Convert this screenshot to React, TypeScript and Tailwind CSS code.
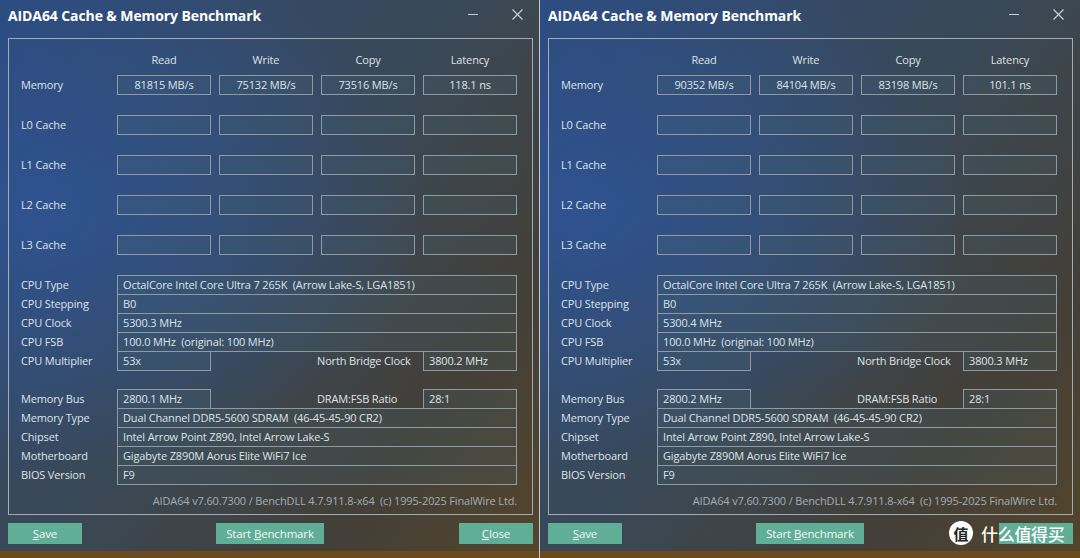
import type { ReactNode } from 'react'

type Bench = {
  read: string
  write: string
  copy: string
  latency: string
  clock: string
  nbClock: string
  memBus: string
}

const left: Bench = {
  read: '81815 MB/s',
  write: '75132 MB/s',
  copy: '73516 MB/s',
  latency: '118.1 ns',
  clock: '5300.3 MHz',
  nbClock: '3800.2 MHz',
  memBus: '2800.1 MHz',
}

const right: Bench = {
  read: '90352 MB/s',
  write: '84104 MB/s',
  copy: '83198 MB/s',
  latency: '101.1 ns',
  clock: '5300.4 MHz',
  nbClock: '3800.3 MHz',
  memBus: '2800.2 MHz',
}

const cacheRows = ['L0 Cache', 'L1 Cache', 'L2 Cache', 'L3 Cache']

function Cell({ children, className = '' }: { children?: ReactNode; className?: string }) {
  return (
    <div className={`flex h-[20px] items-center whitespace-pre border border-[#8e9ba4] bg-[#4a6a72]/20 ${className}`}>
      {children}
    </div>
  )
}

function InfoRow({ label, value, first }: { label: string; value: string; first?: boolean }) {
  return (
    <div className={`flex items-center ${first ? '' : '-mt-px'}`}>
      <span className="w-[96px] shrink-0">{label}</span>
      <Cell className="w-[400px] pl-[5px]">{value}</Cell>
    </div>
  )
}

function SplitRow({ label, value, midLabel, midValue, first }: {
  label: string
  value: string
  midLabel: string
  midValue: string
  first?: boolean
}) {
  return (
    <div className={`flex items-center ${first ? '' : '-mt-px'}`}>
      <span className="w-[96px] shrink-0">{label}</span>
      <Cell className="w-[94px] pl-[5px]">{value}</Cell>
      <span className="ml-[106px] w-[106px]">{midLabel}</span>
      <Cell className="w-[94px] pl-[5px]">{midValue}</Cell>
    </div>
  )
}

function Button({ children, className = '' }: { children?: ReactNode; className?: string }) {
  return (
    <div className={`flex h-[21px] items-center justify-center bg-[#5fae95] text-[11.5px] text-[#f2f8f5] ${className}`}>
      {children}
    </div>
  )
}

function BenchWindow({ data, watermark }: { data: Bench; watermark?: boolean }) {
  return (
    <div className="relative flex h-[551px] flex-col bg-[radial-gradient(ellipse_at_8%_38%,rgba(46,84,150,0.85)_0%,rgba(46,84,150,0)_55%),linear-gradient(128deg,#2c4a7c_0%,#354a66_28%,#3a4855_50%,#433f38_78%,#54452b_100%)] font-['Open_Sans','Noto_Sans',sans-serif] text-[11px] tracking-[-0.15px] text-[#dde3e8]">
      {/* Title bar */}
      <div className="flex h-[38px] items-start justify-between pl-[8px] pr-[16px] pt-[5px]">
        <span className="text-[14px] font-bold tracking-[-0.1px] text-white">AIDA64 Cache &amp; Memory Benchmark</span>
        <div className="flex items-center gap-[34px] pt-[4px]">
          <div className="h-px w-[10px] bg-[#c9d0d6]" />
          <svg width="11" height="11" viewBox="0 0 11 11" stroke="#c9d0d6" strokeWidth="1.2">
            <path d="M0.5 0.5 L10.5 10.5 M10.5 0.5 L0.5 10.5" />
          </svg>
        </div>
      </div>

      {/* Group box */}
      <div className="ml-[8px] flex h-[477px] w-[525px] flex-col border border-[#a3acb3] pl-[12px]">
        <div className="mt-[11px] flex h-[20px] items-center">
          <span className="w-[96px]" />
          <div className="grid grid-cols-[94px_94px_94px_94px] gap-[8px] text-center">
            <span>Read</span>
            <span>Write</span>
            <span>Copy</span>
            <span>Latency</span>
          </div>
        </div>

        <div className="mt-[5px] flex items-center">
          <span className="w-[96px] shrink-0">Memory</span>
          <div className="grid grid-cols-[94px_94px_94px_94px] gap-[8px]">
            <Cell className="justify-center">{data.read}</Cell>
            <Cell className="justify-center">{data.write}</Cell>
            <Cell className="justify-center">{data.copy}</Cell>
            <Cell className="justify-center">{data.latency}</Cell>
          </div>
        </div>

        {cacheRows.map((row) => (
          <div key={row} className="mt-[20px] flex items-center">
            <span className="w-[96px] shrink-0">{row}</span>
            <div className="grid grid-cols-[94px_94px_94px_94px] gap-[8px]">
              <Cell />
              <Cell />
              <Cell />
              <Cell />
            </div>
          </div>
        ))}

        <div className="mt-[20px] flex flex-col">
          <InfoRow first label="CPU Type" value="OctalCore Intel Core Ultra 7 265K  (Arrow Lake-S, LGA1851)" />
          <InfoRow label="CPU Stepping" value="B0" />
          <InfoRow label="CPU Clock" value={data.clock} />
          <InfoRow label="CPU FSB" value="100.0 MHz  (original: 100 MHz)" />
          <SplitRow label="CPU Multiplier" value="53x" midLabel="North Bridge Clock" midValue={data.nbClock} />
        </div>

        <div className="mt-[18px] flex flex-col">
          <SplitRow first label="Memory Bus" value={data.memBus} midLabel="DRAM:FSB Ratio" midValue="28:1" />
          <InfoRow label="Memory Type" value="Dual Channel DDR5-5600 SDRAM  (46-45-45-90 CR2)" />
          <InfoRow label="Chipset" value="Intel Arrow Point Z890, Intel Arrow Lake-S" />
          <InfoRow label="Motherboard" value="Gigabyte Z890M Aorus Elite WiFi7 Ice" />
          <InfoRow label="BIOS Version" value="F9" />
        </div>

        <div className="mt-[8px] flex h-[16px] w-[496px] items-center justify-end whitespace-pre text-[#a3adb4]">
          AIDA64 v7.60.7300 / BenchDLL 4.7.911.8-x64  (c) 1995-2025 FinalWire Ltd.
        </div>
      </div>

      {/* Buttons */}
      <div className="mt-[8px] flex w-[533px] items-center pl-[8px]">
        <Button className="w-[74px]"><span><u>S</u>ave</span></Button>
        <Button className="ml-[134px] w-[108px]"><span>Start <u>B</u>enchmark</span></Button>
        <Button className="ml-auto w-[74px]">{watermark ? null : <span><u>C</u>lose</span>}</Button>
      </div>

      {watermark && (
        <div className="absolute left-[409px] top-[521px] flex items-center gap-[8px]">
          <div className="flex h-[24px] w-[24px] items-center justify-center rounded-full bg-white font-['Noto_Sans_CJK_SC',sans-serif] text-[15px] font-bold leading-none text-[#222]">
            值
          </div>
          <span className="font-['Noto_Sans_CJK_SC',sans-serif] text-[17px] font-medium leading-none tracking-[-0.3px] text-white">
            什么值得买
          </span>
        </div>
      )}
    </div>
  )
}

export default function App() {
  return (
    <div className="flex h-[558px] w-[1080px] flex-col overflow-hidden bg-[#6a4b1c]">
      <div className="flex">
        <div className="w-[539px] shrink-0">
          <BenchWindow data={left} />
        </div>
        <div className="w-px shrink-0 bg-[#c6cace]" />
        <div className="w-[540px] shrink-0">
          <BenchWindow data={right} watermark />
        </div>
      </div>
      <div className="flex flex-1">
        <div className="w-[539px] bg-[#6b4b1d]" />
        <div className="w-px bg-[#c6cace]" />
        <div className="flex-1 bg-[#6b4b1d]" />
      </div>
    </div>
  )
}
